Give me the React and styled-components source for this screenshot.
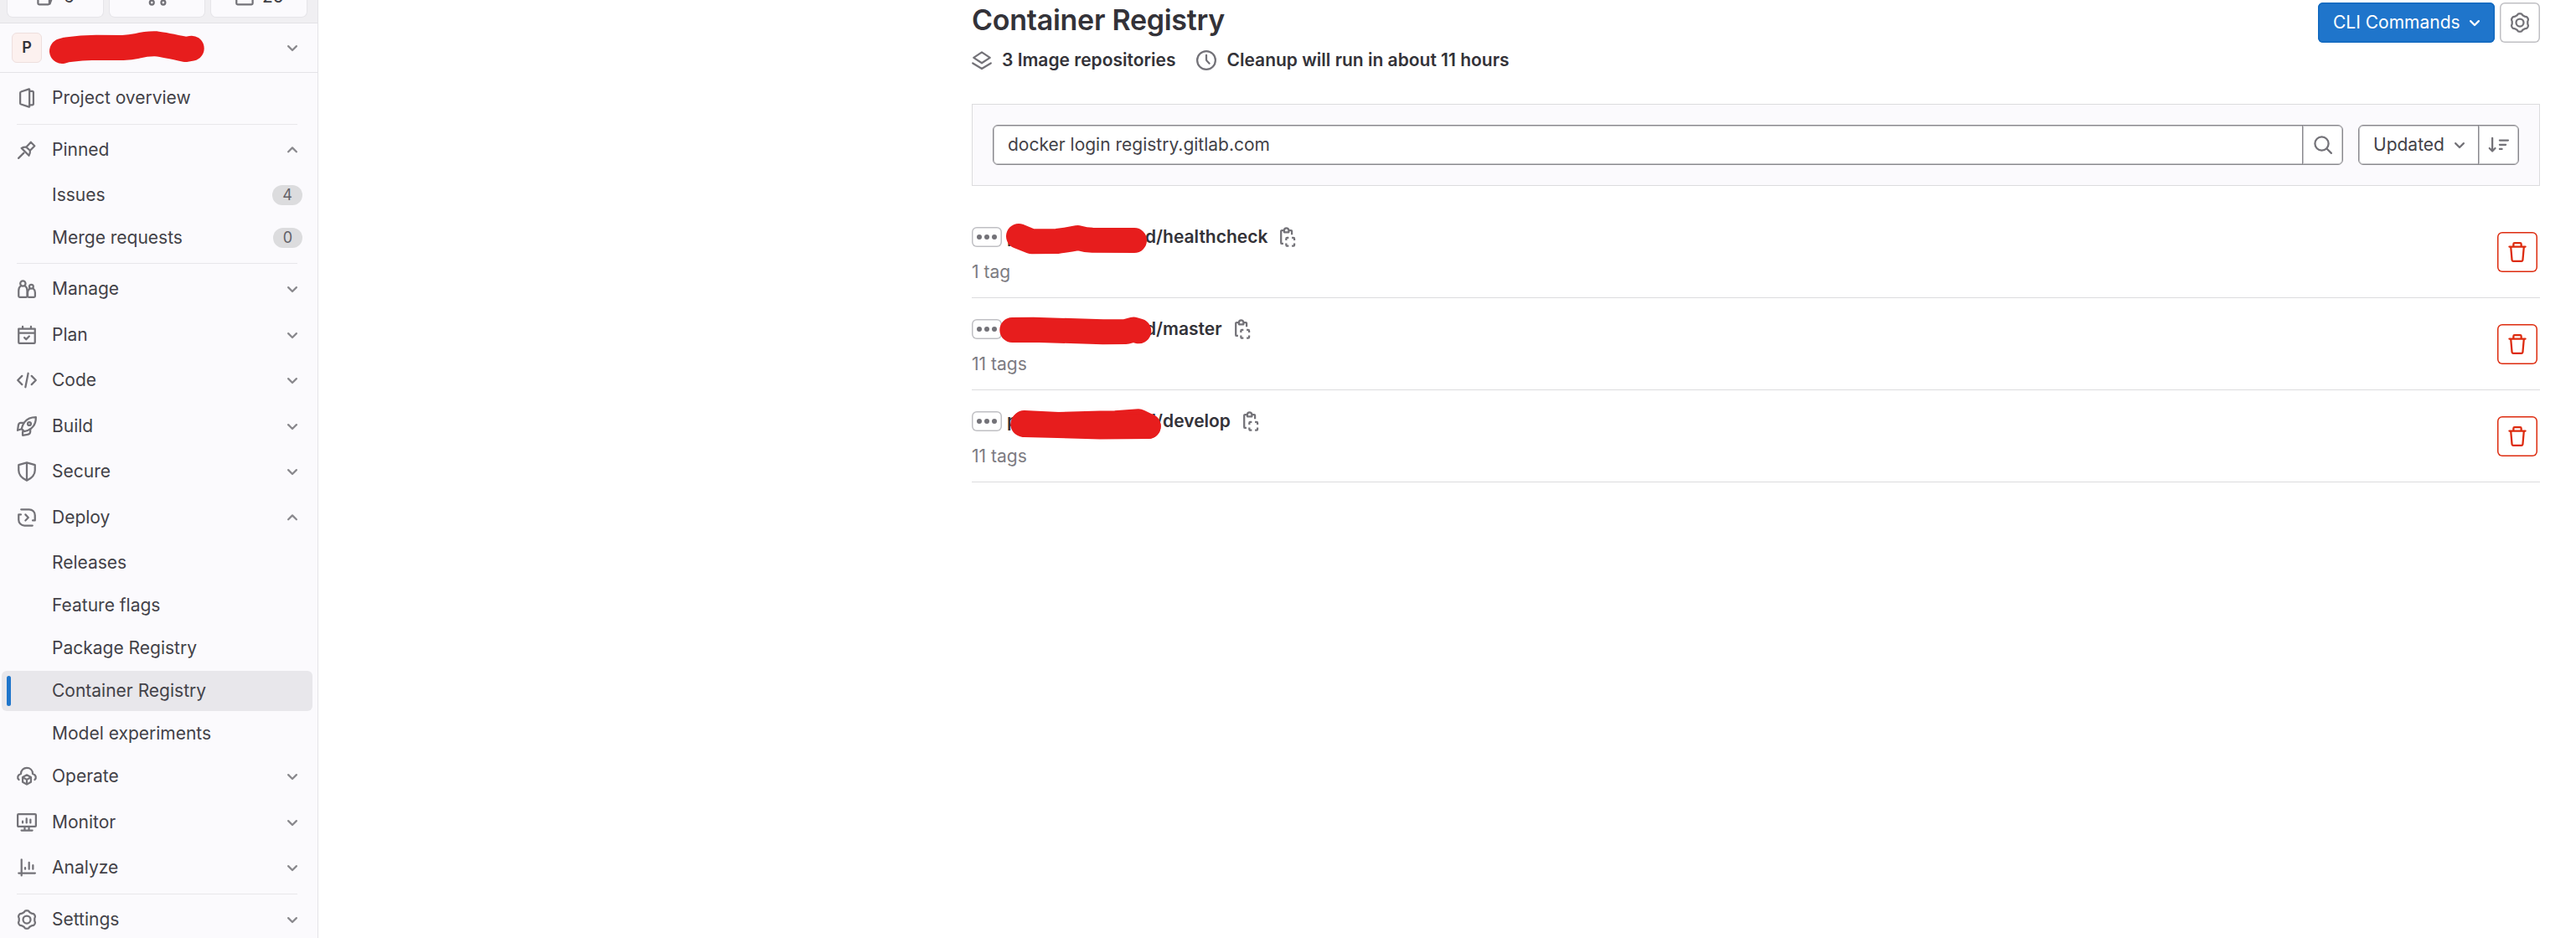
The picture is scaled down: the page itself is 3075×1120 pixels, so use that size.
import React from "react";
import styled, { createGlobalStyle } from "styled-components";

const Global = createGlobalStyle`
  *, *::before, *::after { box-sizing: border-box; }
  body {
    margin: 0;
    background: #fff;
    color: #333238;
    font-family: Inter, "Noto Sans", sans-serif;
    font-size: 21px;
    line-height: 30px;
  }
  button, input { font: inherit; color: inherit; margin: 0; }
`;

/* ---------- icons: 16-unit grid, 1.5 stroke ---------- */

const Svg = styled.svg`
  display: block;
  flex: none;
  width: 24px;
  height: 24px;
  fill: none;
  stroke: currentColor;
  stroke-width: 1.5;
  stroke-linecap: ${(p) => p.$cap || "round"};
  stroke-linejoin: round;
  overflow: visible;
`;

const gearPath = (() => {
  const points = [];
  for (let i = 0; i < 120; i += 1) {
    const a = (i / 120) * Math.PI * 2;
    const wave = Math.tanh(1.7 * Math.cos(6 * a)) / Math.tanh(1.7);
    const r = 6.68 + 0.5 * wave;
    points.push(`${(8 + r * Math.sin(a)).toFixed(2)} ${(8 - r * Math.cos(a)).toFixed(2)}`);
  }
  return `M${points.join("L")}Z`;
})();

const shapes = {
  project: (
    <>
      <path d="M9.7.9 3.4 3a.9.9 0 0 0-.65.9v8.2c0 .4.25.75.65.9l6.3 2.1c.2.05.4-.1.4-.3V1.2c0-.2-.2-.35-.4-.3Z" />
      <path d="M10.3 2.5h1.9c.6 0 1.05.45 1.05 1.05v8.9c0 .6-.45 1.05-1.05 1.05h-1.9" />
    </>
  ),
  pin: (
    <>
      <path d="M1.4 14.6 5.6 10.4" />
      <path d="m11.2 1.8 3 3-3.6 3.7c.1 1.5-.2 2.9-.9 4L3.8 6.6c1.1-.7 2.4-1 3.7-.8Z" />
      <path d="m7.5 5.8 3.1 2.7" />
    </>
  ),
  users: (
    <>
      <circle cx="4.9" cy="3.6" r="2.1" />
      <path d="M3.3 5.6C2 6.4 1.5 7.7 1.5 9.3v4.3c0 .5.4.9.9.9h5.1c.5 0 .8-.4.8-.9V9.3c0-1.6-.5-2.9-1.8-3.7" />
      <circle cx="11.6" cy="6.2" r="1.6" />
      <path d="M10.3 7.8c-1.1.7-1.6 1.7-1.6 3v2.8c0 .5.3.9.8.9h4.2c.5 0 .9-.4.9-.9v-2.8c0-1.3-.5-2.3-1.5-3" />
    </>
  ),
  calendar: (
    <>
      <path d="M1.5 3h13v10.8c0 .4-.3.7-.7.7H2.2c-.4 0-.7-.3-.7-.7ZM1.5 6.4h13M4.7 1.3V3M11.3 1.3V3" />
      <path d="m6.1 10.1 1.4 1.4 2.4-2.5" />
    </>
  ),
  code: <path d="M4.2 4.6.8 8l3.4 3.4M11.8 4.6 15.2 8l-3.4 3.4M9.1 2.5 6.9 13.5" />,
  rocket: (
    <>
      <path d="M15.25.75C11 .75 8.3 2 6.3 4.6 5 6.4 4.2 8.2 3.9 10.1l2 2c1.9-.3 3.7-1 5.5-2.4C14 7.7 15.25 5 15.25.75Z" />
      <circle cx="10" cy="6" r="1.3" />
      <path d="M5.5 5.2H3.1C2 5.2 1.5 6 1.3 7L.7 11.2l3.2-1M4.7 12.2v3l3.8-.6c1.5-.2 2.3-.9 2.3-2.4V10.3" />
    </>
  ),
  shield: <path d="M8 .9 14.5 2.7V7c0 4-3.2 6.6-6.5 8.2C4.7 13.6 1.5 11 1.5 7V2.7ZM8 .9v14.3" />,
  deploy: (
    <>
      <path d="M3.5 1.5H9.9a4.6 4.6 0 0 1 4.6 4.6v4.2h-1.8M12.5 14.4H6.1A4.6 4.6 0 0 1 1.5 9.8V5.6h1.8" />
      <path d="M6.9 5.6 9.2 8 6.9 10.3" />
    </>
  ),
  cloud: (
    <>
      <path d="M1.7 10.7C.2 9.3.5 6.8 3.3 6 3.3 3 5.5 1.3 8 1.3S12.7 3 12.7 6c2.8.8 3.1 3.3 1.6 4.7" />
      <path d="M8 6.9 11.3 8.7V12.5L8 14.4 4.7 12.5V8.7ZM4.9 8.8 8 10.6l3.1-1.8M8 10.6v3.6" />
    </>
  ),
  monitor: (
    <>
      <path d="M1.4 1.4h13.2c.4 0 .65.3.65.65v8.6c0 .35-.25.65-.65.65H1.4c-.4 0-.65-.3-.65-.65v-8.6c0-.35.25-.65.65-.65ZM6.3 11.5v2.7M9.7 11.5v2.7M3.7 14.4h8.7" />
      <path d="M4.7 7.1v1.2M7.8 4.9v3.4M10.9 5.8v2.5" />
    </>
  ),
  chart: <path d="M3.8 1.5v12.8M1.5 12.4h13.1M6.7 8.1v1M9.8 3.9v5.2M12.9 6.1v3" />,
  gear: (
    <>
      <path d={gearPath} />
      <circle cx="8" cy="8" r="3" />
    </>
  ),
  layers: <path d="M8 1.6 14.5 5.9 8 10.2 1.5 5.9ZM.8 10.3 8 14.7l7.2-4.4" />,
  clock: (
    <>
      <circle cx="8" cy="8" r="7.25" />
      <path d="M8 3.9V7.3c0 .5.2.9.5 1.2l1.9 2" />
    </>
  ),
  search: (
    <>
      <circle cx="7" cy="7" r="5.4" />
      <path d="m11 11 3.6 3.6" />
    </>
  ),
  sort: <path d="M2.75 2.5v10.4M.5 10.7l2.25 2.3L5 10.7M8.6 4.4h6.7M8.6 7.9h4.8M8.6 11.3h1.8" />,
  copy: (
    <>
      <path d="M4.6 13.3H3.5a.7.7 0 0 1-.7-.7V3.4c0-.4.3-.7.7-.7h1.8M8.9 2.7h1.8c.4 0 .7.3.7.7V6.2" />
      <path d="M5.3 4.2V2.7a1.8 1.8 0 0 1 3.6 0v1.5Z" />
      <path d="M6.9 10.7V9.3c0-.4.3-.7.7-.7h1.3M11.4 8.6h1.3c.4 0 .7.3.7.7v1.4M13.4 13v1.4c0 .4-.3.7-.7.7h-1.3M8.9 15.1H7.6a.7.7 0 0 1-.7-.7V13" />
    </>
  ),
  trash: (
    <path d="M1.6 3.7h12.8M4.9 3.5V1.7c0-.5.4-.9.9-.9h4.4c.5 0 .9.4.9.9v1.8M2.8 3.9l.9 10.4c.05.5.4.9.9.9h6.8c.5 0 .85-.4.9-.9l.9-10.4" />
  ),
  down: <path d="M4.75 6.75 8 10l3.25-3.25" />,
  up: <path d="M4.75 9.5 8 6.25l3.25 3.25" />,
  issues: <path d="M10.2 1.5H2.5c-.5 0-.9.4-.9.9v11c0 .5.4.9.9.9h7.2c.5 0 .9-.4.9-.9V2M11 13.8l3.3-9.3" />,
  merge: (
    <>
      <circle cx="3.5" cy="12.7" r="1.65" />
      <circle cx="12.6" cy="12.7" r="1.65" />
      <path d="M3.5 10.5V4M12.6 10.5V6c0-1.500-1-2.500-2.500-2.500H8.500" />
    </>
  ),
  todo: (
    <>
      <path d="M1.500 2.400v11c0 .5.4.9.9.9h11.100c.5 0 .9-.4.9-.9V2.400" />
      <path d="m5.500 5.500 3.300 3.800 5-6" />
    </>
  ),
};

const Icon = ({ name, cap }) => (
  <Svg viewBox="0 0 16 16" $cap={cap} aria-hidden="true">
    {shapes[name]}
  </Svg>
);

/* ---------- layout ---------- */

const Page = styled.div`
  display: flex;
  height: 1120px;
  overflow: hidden;
`;

const Sidebar = styled.aside`
  display: flex;
  flex-direction: column;
  flex: none;
  width: 380px;
  background: #fbfafd;
  border-right: 1px solid #e4e3e7;
`;

const CounterBar = styled.div`
  display: flex;
  align-items: flex-end;
  flex: none;
  gap: 8px;
  height: 28px;
  padding: 0 13px 7px 9px;
  overflow: hidden;
  background: #f0eff2;
  border-bottom: 1px solid #e3e2e6;
`;

const Counter = styled.div`
  display: flex;
  align-items: center;
  justify-content: center;
  flex: 1;
  gap: 9px;
  height: 48px;
  color: #3f3e45;
  background: #fbfafd;
  border-radius: 6px;
  box-shadow: 0 0 0 1px #e6e5e9;
  svg { color: #737278; }
`;

const ProjectHeader = styled.div`
  display: flex;
  align-items: center;
  flex: none;
  height: 59px;
  padding: 0 18px 0 14px;
  border-bottom: 1px solid #e4e3e7;
  color: #89888d;
`;

const Avatar = styled.div`
  display: grid;
  place-items: center;
  width: 36px;
  height: 36px;
  border: 1px solid #eedfde;
  border-radius: 6px;
  background: #fcf1ef;
  color: #333238;
  font-size: 18px;
  font-weight: 600;
`;

const Marker = styled.span`
  position: relative;
  flex: 1;
  align-self: stretch;
`;

const Scribble = styled.svg`
  position: absolute;
  left: ${(p) => p.$left}px;
  top: ${(p) => p.$top}px;
  width: 260px;
  height: 60px;
  fill: none;
  stroke: #e71d1d;
  stroke-width: 30;
  stroke-linecap: round;
  stroke-linejoin: round;
  overflow: visible;
  pointer-events: none;
`;

const Nav = styled.nav`
  display: flex;
  flex-direction: column;
  padding: 6px 6px 0 2px;
`;

const Divider = styled.hr`
  flex: none;
  width: 335px;
  height: 1px;
  margin: ${(p) => p.$above}px 0 6px 18px;
  border: 0;
  background: #e8e7eb;
`;

const NavRow = styled.a`
  display: flex;
  align-items: center;
  flex: none;
  position: relative;
  height: 48px;
  margin-top: ${(p) => p.$gap || 0}px;
  padding: 0 12px 0 ${(p) => (p.$sub ? 60 : 18)}px;
  gap: 18px;
  border-radius: 6px;
  background: ${(p) => (p.$active ? "#e8e7eb" : "transparent")};
  color: #434248;
  text-decoration: none;
  svg { color: #737278; }
  > svg:last-child { color: #89888d; }

  &::before {
    content: "";
    display: ${(p) => (p.$active ? "block" : "none")};
    position: absolute;
    left: 6px;
    top: 6px;
    width: 5px;
    height: 36px;
    border-radius: 3px;
    background: #1f75cb;
  }
`;

const NavText = styled.span`
  flex: 1;
  white-space: nowrap;
`;

const Badge = styled.span`
  display: grid;
  place-items: center;
  width: ${(p) => p.$width}px;
  height: 24px;
  border-radius: 12px;
  background: #dcdcde;
  color: #626168;
  font-size: 18px;
  line-height: 24px;
`;

const Main = styled.main`
  flex: 1;
  display: flex;
  flex-direction: column;
  padding: 3px 43px 0 780px;
`;

const TitleBar = styled.header`
  display: flex;
  justify-content: space-between;
  height: 121px;
`;

const Title = styled.h1`
  margin: 0 0 9px;
  font-size: 34px;
  font-weight: 600;
  line-height: 42px;
  letter-spacing: -0.27px;
  white-space: nowrap;
`;

const Meta = styled.div`
  display: flex;
  gap: 25px;
  line-height: 36px;
`;

const MetaItem = styled.span`
  display: flex;
  align-items: center;
  gap: 12px;
  font-weight: 600;
  white-space: nowrap;
  svg { color: #737278; }
`;

const Actions = styled.div`
  display: flex;
  gap: 6px;
`;

const PrimaryButton = styled.button`
  display: flex;
  align-items: center;
  justify-content: space-between;
  width: 211px;
  height: 48px;
  padding: 0 12px 0 18px;
  border: 0;
  border-radius: 6px;
  background: #1f75cb;
  box-shadow: inset 0 0 0 1.5px #1068bf;
  color: #fff;
  white-space: nowrap;
`;

const IconButton = styled.button`
  display: grid;
  place-items: center;
  flex: none;
  width: 48px;
  height: 48px;
  padding: 0;
  border: 0;
  border-radius: 6px;
  background: #fff;
  box-shadow: inset 0 0 0 1.5px ${(p) => (p.$danger ? "#dd2b0e" : "#bfbfc3")};
  color: ${(p) => (p.$danger ? "#dd2b0e" : "#737278")};
`;

const FilterBar = styled.section`
  display: flex;
  gap: 18px;
  height: 98px;
  padding: 24px;
  border: 1px solid #dcdcde;
  background: #fbfafd;
`;

const Group = styled.div`
  display: flex;
  flex: ${(p) => (p.$grow ? 1 : "none")};
  height: 48px;
  border: 1px solid #89888d;
  border-radius: 6px;
  background: #fff;
  box-shadow: inset 0 0 0 1px #c4c4c7;
  overflow: hidden;
`;

const SearchInput = styled.input`
  flex: 1;
  min-width: 0;
  padding: 0 17px;
  border: 0;
  outline: 0;
  background: transparent;
  color: #434248;
`;

const GroupButton = styled.button`
  display: flex;
  align-items: center;
  justify-content: ${(p) => (p.$label ? "space-between" : "center")};
  width: ${(p) => (p.$label ? 142 : 48)}px;
  padding: ${(p) => (p.$label ? "0 10px 0 17px" : 0)};
  border: 0;
  border-left: ${(p) => (p.$label ? "0" : "1px solid #89888d")};
  box-shadow: ${(p) => (p.$label ? "none" : "inset 1px 0 #c4c4c7")};
  background: transparent;
  color: #434248;
  svg { color: #737278; }
`;

const List = styled.ul`
  margin: 24px 0 0;
  padding: 0;
  list-style: none;
`;

const Item = styled.li`
  display: flex;
  align-items: center;
  justify-content: space-between;
  position: relative;
  height: 110px;
  padding: 0 3px 0 0;
  border-bottom: 1px solid #dcdcde;
`;

const Details = styled.div`
  display: flex;
  flex-direction: column;
  gap: 12px;
  padding-top: 7px;
`;

const NameLine = styled.div`
  display: flex;
  align-items: center;
  height: 30px;
  font-weight: 600;
  white-space: nowrap;
  svg { color: #737278; }
`;

const More = styled.button`
  display: flex;
  align-items: center;
  justify-content: center;
  gap: 3px;
  width: 36px;
  height: 24px;
  margin-right: 6px;
  padding: 0;
  border: 0;
  border-radius: 6px;
  background: #fff;
  box-shadow: inset 0 0 0 1.5px #bfbfc3;
`;

const Dot = styled.i`
  width: 6px;
  height: 6px;
  border-radius: 50%;
  background: #737278;
`;

const Prefix = styled.span`
  width: 165px;
`;

const Suffix = styled.span`
  margin-right: 12px;
`;

const Tags = styled.span`
  color: #7c7b81;
`;

/* ---------- data ---------- */

const nav = [
  { icon: "project", label: "Project overview" },
  { divider: true, above: 7 },
  { icon: "pin", label: "Pinned", chevron: "up" },
  { sub: true, label: "Issues", badge: "4", badgeWidth: 36, gap: 6 },
  { sub: true, label: "Merge requests", badge: "0", badgeWidth: 35, gap: 3 },
  { divider: true, above: 6 },
  { icon: "users", label: "Manage", chevron: "down" },
  { icon: "calendar", label: "Plan", chevron: "down", gap: 7 },
  { icon: "code", label: "Code", chevron: "down", gap: 6 },
  { icon: "rocket", label: "Build", chevron: "down", gap: 7 },
  { icon: "shield", label: "Secure", chevron: "down", gap: 6 },
  { icon: "deploy", label: "Deploy", chevron: "up", gap: 7 },
  { sub: true, label: "Releases", gap: 6 },
  { sub: true, label: "Feature flags", gap: 3 },
  { sub: true, label: "Package Registry", gap: 3 },
  { sub: true, label: "Container Registry", gap: 3, active: true },
  { sub: true, label: "Model experiments", gap: 3 },
  { icon: "cloud", label: "Operate", chevron: "down", gap: 3 },
  { icon: "monitor", label: "Monitor", chevron: "down", gap: 7 },
  { icon: "chart", label: "Analyze", chevron: "down", gap: 6 },
  { divider: true, above: 7 },
  { icon: "gear", label: "Settings", chevron: "down" },
];

const repositories = [
  {
    suffix: "d/healthcheck",
    tags: "1 tag",
    strokes: ["M56 36 71.7 42.3 101.7 42Q115 40.5 126.7 38 135 40.5 144 40.8L194 41"],
  },
  {
    suffix: "d/master",
    tags: "11 tags",
    strokes: ["M48.3 38 73.3 37.7 156.7 40.3 184 40 193.3 37.5 199.3 39.3"],
  },
  {
    suffix: "d/develop",
    tags: "11 tags",
    strokes: [
      "M62.5 39 103.3 41 153.3 39.5 171.7 39.3 199.3 37.3 210.7 43",
      "M61.3 40.5 63 41 153.3 43.5 210.7 43",
    ],
  },
];

export default function App() {
  return (
    <>
      <Global />
      <Page>
        <Sidebar>
          <CounterBar>
            <Counter><Icon name="issues" />6</Counter>
            <Counter><Icon name="merge" /></Counter>
            <Counter><Icon name="todo" />25</Counter>
          </CounterBar>
          <ProjectHeader>
            <Avatar>P</Avatar>
            <Marker>
              <Scribble $left={9} $top={0}>
                <path d="M15 33 21 31.3Q38 29 56 28.7L87.7 29Q97 28.5 104.3 27 117 23.8 127.7 24.3 138 25.5 162.7 31L169.7 29.7" />
              </Scribble>
            </Marker>
            <Icon name="down" />
          </ProjectHeader>
          <Nav>
            {nav.map((item, i) =>
              item.divider ? (
                <Divider key={i} $above={item.above} />
              ) : (
                <NavRow key={i} $sub={item.sub} $gap={item.gap} $active={item.active}>
                  {item.icon && <Icon name={item.icon} />}
                  <NavText>{item.label}</NavText>
                  {item.badge && <Badge $width={item.badgeWidth}>{item.badge}</Badge>}
                  {item.chevron && <Icon name={item.chevron} />}
                </NavRow>
              )
            )}
          </Nav>
        </Sidebar>
        <Main>
          <TitleBar>
            <div>
              <Title>Container Registry</Title>
              <Meta>
                <MetaItem><Icon name="layers" />3 Image repositories</MetaItem>
                <MetaItem><Icon name="clock" />Cleanup will run in about 11 hours</MetaItem>
              </Meta>
            </div>
            <Actions>
              <PrimaryButton>CLI Commands<Icon name="down" /></PrimaryButton>
              <IconButton aria-label="Settings"><Icon name="gear" /></IconButton>
            </Actions>
          </TitleBar>
          <FilterBar>
            <Group $grow>
              <SearchInput defaultValue="docker login registry.gitlab.com" />
              <GroupButton aria-label="Search"><Icon name="search" /></GroupButton>
            </Group>
            <Group>
              <GroupButton $label>Updated<Icon name="down" /></GroupButton>
              <GroupButton aria-label="Sort direction"><Icon name="sort" /></GroupButton>
            </Group>
          </FilterBar>
          <List>
            {repositories.map((repo) => (
              <Item key={repo.suffix}>
                <Details>
                  <NameLine>
                    <More aria-label="Show full path"><Dot /><Dot /><Dot /></More>
                    <Prefix>p</Prefix>
                    <Suffix>{repo.suffix}</Suffix>
                    <Icon name="copy" cap="butt" />
                  </NameLine>
                  <Tags>{repo.tags}</Tags>
                </Details>
                <Scribble $left={0} $top={0}>
                  {repo.strokes.map((d) => <path key={d} d={d} />)}
                </Scribble>
                <IconButton $danger aria-label="Delete"><Icon name="trash" /></IconButton>
              </Item>
            ))}
          </List>
        </Main>
      </Page>
    </>
  );
}
